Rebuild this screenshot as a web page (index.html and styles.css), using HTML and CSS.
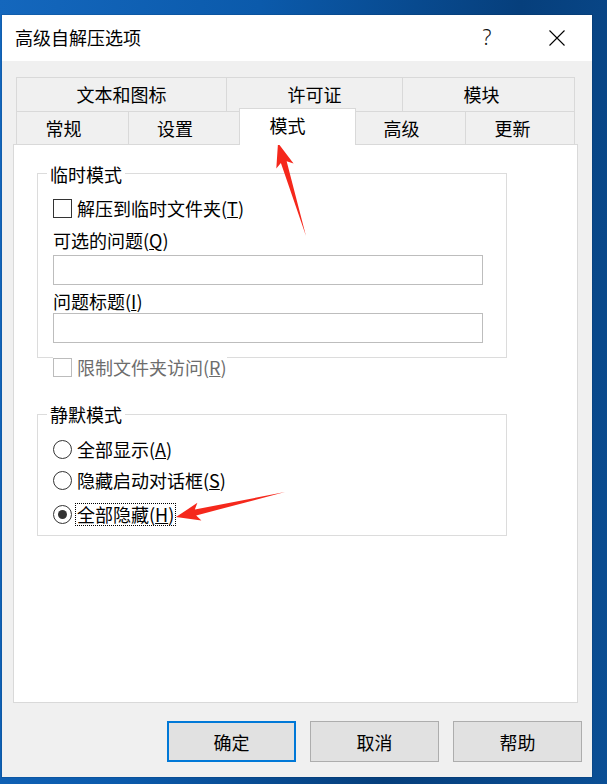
FILE: index.html
```html
<!DOCTYPE html>
<html lang="zh-CN">
<head>
<meta charset="utf-8">
<title>高级自解压选项</title>
<link rel="stylesheet" href="styles.css">
</head>
<body>
<div class="desktop">
  <div class="window">
    <div class="titlebar">
      <span class="title">高级自解压选项</span>
      <div class="caption-btns">
        <span class="cap help">?</span>
        <span class="cap close">
          <svg width="16" height="16" viewBox="0 0 16 16"><path d="M0.5 0.5 L15.5 15.5 M15.5 0.5 L0.5 15.5" stroke="#000" stroke-width="1.1" fill="none"/></svg>
        </span>
      </div>
    </div>
    <div class="client">
      <div class="tabs">
        <div class="tabrow row1">
          <div class="tab w210">文本和图标</div>
          <div class="tab w176">许可证</div>
          <div class="tab w173 last shift">模块</div>
        </div>
        <div class="tabrow row2">
          <div class="tab w112">常规</div>
          <div class="tab w111">设置</div>
          <div class="tab sel">模式</div>
          <div class="tab w109 noleft">高级</div>
          <div class="tab w110 last">更新</div>
        </div>
      </div>
      <div class="panel">
        <div class="group g1">
          <div class="legend">临时模式</div>
          <div class="opt check-first">
            <span class="box"></span><span class="lbl">解压到临时文件夹(<u>T</u>)</span>
          </div>
          <div class="flabel fl1">可选的问题(<u>Q</u>)</div>
          <div class="textbox tb1"></div>
          <div class="flabel fl2">问题标题(<u>I</u>)</div>
          <div class="textbox tb2"></div>
        </div>
        <div class="opt disabled">
          <span class="box"></span><span class="lbl">限制文件夹访问(<u>R</u>)</span>
        </div>
        <div class="group g2">
          <div class="legend">静默模式</div>
          <div class="opt radio r1">
            <span class="dot"></span><span class="lbl">全部显示(<u>A</u>)</span>
          </div>
          <div class="opt radio r2">
            <span class="dot"></span><span class="lbl">隐藏启动对话框(<u>S</u>)</span>
          </div>
          <div class="opt radio r3">
            <span class="dot on"></span><span class="lbl focus">全部隐藏(<u>H</u>)</span>
          </div>
        </div>
      </div>
      <div class="buttons">
        <div class="btn default">确定</div>
        <div class="btn">取消</div>
        <div class="btn">帮助</div>
      </div>
    </div>
  </div>
  <svg class="arrows" width="607" height="784" viewBox="0 0 607 784">
    <polygon points="306,236 286.65,161.31 293.56,163.41 278,143 276.30,168.61 280.89,163.05" fill="#f5281c"/>
    <polygon points="285,492 194.83,509.60 197.39,502.86 176,517 201.41,520.40 196.17,515.45" fill="#f5281c"/>
  </svg>
</div>
</body>
</html>
```

FILE: styles.css
```css
html, body {
  margin: 0;
  padding: 0;
}
body {
  font-family: "Noto Sans CJK SC", "Noto Sans", sans-serif;
  font-size: 18px;
  color: #000;
}
.desktop {
  position: relative;
  width: 607px;
  height: 784px;
  overflow: hidden;
  padding-top: 15px;
  box-sizing: border-box;
  background: linear-gradient(100deg, #1467bd 0%, #0b5aab 35%, #063f7c 70%, #0b4f95 100%);
}
.window {
  margin-left: 2px;
  width: 590px;
  height: 762px;
  display: flex;
  flex-direction: column;
  box-shadow: 0 0 0 1px rgba(0, 0, 0, 0.08);
}
.titlebar {
  height: 46px;
  background: #fff;
  display: flex;
  align-items: center;
  padding-left: 13px;
  flex: none;
}
.title {
  line-height: 44px;
  padding-bottom: 2px;
  flex: 1;
}
.caption-btns {
  display: flex;
  height: 46px;
}
.cap {
  width: 70px;
  height: 46px;
  display: flex;
  align-items: center;
  justify-content: center;
}
.help {
  font-family: "Noto Sans", "DejaVu Sans", sans-serif;
  font-weight: 300;
  font-size: 21px;
  color: #111;
  padding-bottom: 2px;
  box-sizing: border-box;
}
.close svg {
  display: block;
}
.client {
  flex: 1;
  background: #f0f0f0;
  padding-top: 16px;
  display: flex;
  flex-direction: column;
}
.tabs {
  margin-left: 14px;
  width: 559px;
}
.tabrow {
  display: flex;
}
.row1 {
  height: 34px;
}
.row2 {
  height: 33px;
}
.tab {
  box-sizing: border-box;
  border-top: 1px solid #d9d9d9;
  border-left: 1px solid #d9d9d9;
  text-align: center;
  background: #f0f0f0;
  flex: none;
}
.row1 .tab {
  height: 34px;
  line-height: 33px;
}
.row1 .tab.shift {
  padding-right: 14px;
}
.row2 .tab {
  height: 33px;
  line-height: 32px;
  padding-right: 18px;
}
.tab.last {
  border-right: 1px solid #d9d9d9;
}
.tab.noleft {
  border-left: none;
}
.w210 { width: 210px; }
.w176 { width: 176px; }
.w173 { width: 173px; }
.w112 { width: 112px; }
.w111 { width: 111px; }
.w109 { width: 109px; }
.w110 { width: 110px; }
.row2 .tab.w110 {
  padding-right: 15px;
}
.row2 .tab.sel {
  width: 117px;
  height: 37px;
  margin-top: -3px;
  align-self: flex-start;
  background: #fff;
  border-right: 1px solid #d9d9d9;
  line-height: 32px;
  padding-bottom: 4px;
  padding-right: 20px;
  position: relative;
  z-index: 1;
}
.panel {
  margin-left: 11px;
  width: 565px;
  height: 559px;
  box-sizing: border-box;
  border: 1px solid #d9d9d9;
  background: #fff;
  padding-left: 23px;
  padding-top: 28px;
  flex: none;
}
.group {
  width: 470px;
  box-sizing: border-box;
  border: 1px solid #dcdcdc;
  padding-left: 15px;
}
.g1 {
  padding-bottom: 14px;
}
.g2 {
  margin-top: 36px;
  padding-bottom: 9px;
}
.legend {
  width: fit-content;
  line-height: 22px;
  padding: 0 3px;
  margin-left: -6px;
  background: #fff;
}
.g1 .legend {
  margin-top: -11px;
}
.g2 .legend {
  margin-top: -12px;
}
.opt {
  display: flex;
  align-items: center;
  width: fit-content;
  height: 22px;
  line-height: 22px;
  background: #fff;
}
.box {
  width: 19px;
  height: 19px;
  box-sizing: border-box;
  border: 1px solid #333;
  background: #fff;
  flex: none;
}
.lbl {
  margin-left: 5px;
  white-space: nowrap;
}
.check-first {
  margin-top: 12px;
}
.flabel {
  line-height: 22px;
}
.fl1 {
  margin-top: 10px;
}
.fl2 {
  margin-top: 5px;
}
.textbox {
  width: 430px;
  height: 30px;
  box-sizing: border-box;
  border: 1px solid #bdbdbd;
  background: #fff;
}
.tb1 {
  margin-top: 4px;
}
.tb2 {
  margin-top: 1px;
}
.opt.disabled {
  margin-top: -2px;
  margin-left: 16px;
  color: #6d6d6d;
}
.opt.disabled .box {
  border-color: #bcbcbc;
}
.dot {
  width: 19px;
  height: 19px;
  box-sizing: border-box;
  border: 1px solid #333;
  border-radius: 50%;
  background: #fff;
  flex: none;
  display: flex;
  align-items: center;
  justify-content: center;
}
.dot.on::after {
  content: "";
  width: 9px;
  height: 9px;
  border-radius: 50%;
  background: #333;
}
.r1 {
  margin-top: 13px;
}
.r2 {
  margin-top: 9px;
}
.r3 {
  margin-top: 12px;
  height: 23px;
}
.lbl.focus {
  margin-left: 3px;
  border: 1px dotted #000;
  line-height: 21px;
  padding: 0 1px;
}
u {
  text-decoration: underline;
  text-underline-offset: 1px;
}
.buttons {
  margin-top: 18px;
  display: flex;
  justify-content: flex-end;
  gap: 14px;
  padding-right: 10px;
}
.btn {
  width: 129px;
  height: 41px;
  box-sizing: border-box;
  border: 1px solid #adadad;
  background: #e1e1e1;
  display: flex;
  align-items: center;
  justify-content: center;
  line-height: 22px;
}
.btn.default {
  border: 2px solid #0078d7;
}
.arrows {
  position: absolute;
  left: 0;
  top: 0;
  pointer-events: none;
}
```
